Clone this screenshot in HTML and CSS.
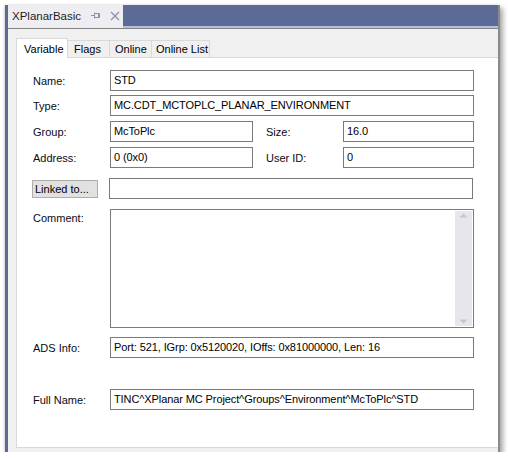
FILE: index.html
```html
<!DOCTYPE html>
<html>
<head>
<meta charset="utf-8">
<link rel="stylesheet" href="styles.css">
</head>
<body>
<div class="window">
  <div class="titlebar">
    <div class="doctab">
      <span class="doctab-title">XPlanarBasic</span>
      <svg class="pin" width="9" height="9" viewBox="0 0 9 9"><path d="M0 4.5H3.5M3.5 1.5V7.5M3.5 2.5H8.5V6.5H3.5M7.5 2.5V6.5" fill="none" stroke="#8c92ac" stroke-width="1"/></svg>
      <svg class="close" width="10" height="10" viewBox="0 0 10 10"><path d="M1 1L9 9M9 1L1 9" stroke="#8c92ac" stroke-width="1.3"/></svg>
    </div>
  </div>
  <div class="accent"></div>
  <div class="panel">
    <div class="tabs">
      <div class="tab active">Variable</div>
      <div class="tab t-flags">Flags</div>
      <div class="tab t-online">Online</div>
      <div class="tab t-list">Online List</div>
    </div>
    <div class="content">
      <div class="row r-name">
        <label class="lbl">Name:</label>
        <div class="field wide">STD</div>
      </div>
      <div class="row r-type">
        <label class="lbl">Type:</label>
        <div class="field wide">MC.CDT_MCTOPLC_PLANAR_ENVIRONMENT</div>
      </div>
      <div class="row r-group">
        <label class="lbl">Group:</label>
        <div class="field half">McToPlc</div>
        <label class="lbl lbl2">Size:</label>
        <div class="field small">16.0</div>
      </div>
      <div class="row r-addr">
        <label class="lbl">Address:</label>
        <div class="field half">0 (0x0)</div>
        <label class="lbl lbl2">User ID:</label>
        <div class="field small">0</div>
      </div>
      <div class="row r-link">
        <div class="btn-cell"><button class="btn">Linked to...</button></div>
        <div class="field wide"></div>
      </div>
      <div class="row r-comment">
        <label class="lbl top">Comment:</label>
        <div class="field wide textarea">
          <div class="scrollbar">
            <svg width="17" height="8" viewBox="0 0 17 8"><path d="M4.5 6.5L8.5 2.5L12.5 6.5Z" fill="#c6c6d0"/></svg>
            <svg width="17" height="8" viewBox="0 0 17 8"><path d="M4.5 1.5L8.5 5.5L12.5 1.5Z" fill="#c6c6d0"/></svg>
          </div>
        </div>
      </div>
      <div class="row r-ads">
        <label class="lbl">ADS Info:</label>
        <div class="field wide">Port: 521, IGrp: 0x5120020, IOffs: 0x81000000, Len: 16</div>
      </div>
      <div class="row r-full">
        <label class="lbl">Full Name:</label>
        <div class="field wide">TINC^XPlanar MC Project^Groups^Environment^McToPlc^STD</div>
      </div>
    </div>
  </div>
</div>
</body>
</html>
```
FILE: styles.css
```css
* { box-sizing: border-box; }
html, body { margin: 0; padding: 0; background: #ffffff; }
body {
  font-family: "Liberation Sans", Arial, sans-serif;
  font-size: 11px;
  color: #000;
}
.window {
  margin: 5px 0 0 5px;
  width: 495px;
  height: 447px;
  display: flex;
  flex-direction: column;
  background: #f0f0f0;
  border-left: 3px solid #5c6a96;
  border-right: 2px solid #8a8a8a;
  box-shadow: 3px 3px 5px rgba(0,0,0,0.35), -1px 0 2px rgba(0,0,0,0.15);
}
.titlebar {
  height: 21px;
  background: #5c6a96;
  display: flex;
  align-items: flex-end;
}
.doctab {
  width: 115px;
  height: 21px;
  background: #eeeef2;
  display: flex;
  align-items: center;
  padding-left: 4px;
}
.doctab-title {
  width: 78px;
  font-size: 11.5px;
  color: #1e1e1e;
  white-space: nowrap;
}
.pin { margin-left: 1px; }
.close { margin-left: 10px; }
.accent {
  height: 3px;
  background: #eeeef2;
  border-bottom: 1px solid #858585;
  position: relative;
}
.accent::after {
  content: "";
  position: absolute;
  left: 115px; right: 0; top: 0;
  height: 2px;
  background: #b4bede;
}
.panel {
  flex: 1;
  display: flex;
  flex-direction: column;
  padding: 8px 0 4px 8px;
}
.tabs {
  display: flex;
  align-items: flex-end;
  height: 20px;
}
.tab {
  height: 17px;
  border: 1px solid #d9d9d9;
  border-bottom: none;
  border-left: none;
  display: flex;
  align-items: center;
  background: #f0f0f0;
  color: #000;
  white-space: nowrap;
}
.tab.active {
  width: 52px;
  height: 20px;
  background: #ffffff;
  border-left: 1px solid #d9d9d9;
  padding-left: 7px;
  margin-bottom: -1px;
  position: relative;
  z-index: 1;
}
.t-flags { width: 42px; padding-left: 6px; }
.t-online { width: 42px; padding-left: 5px; }
.t-list { width: 58px; padding-left: 4px; }
.content {
  flex: 1;
  background: #ffffff;
  border: 1px solid #d9d9d9;
  border-right: none;
  padding: 12px 0 0 16px;
  display: flex;
  flex-direction: column;
}
.row {
  display: flex;
  align-items: center;
}
.lbl {
  width: 77px;
  color: #0a0a14;
}
.lbl.top { align-self: flex-start; padding-top: 3px; }
.lbl2 { width: 77px; margin-left: 13px; }
.field {
  height: 21px;
  border: 1px solid #7a7a7a;
  background: #fff;
  padding: 1px 3px 0 3px;
  line-height: 17px;
  white-space: nowrap;
  overflow: hidden;
  color: #000;
  letter-spacing: -0.1px;
}
.wide { width: 364px; }
.half { width: 143px; }
.small { width: 131px; }
.r-type { margin-top: 4px; }
.r-group { margin-top: 5px; }
.r-addr { margin-top: 5px; }
.r-link { margin-top: 10px; }
.btn-cell { width: 77px; margin-left: -1px; }
.btn {
  width: 66px;
  height: 18px;
  background: #e1e1e1;
  border: 1px solid #adadad;
  font-family: inherit;
  font-size: 11px;
  color: #000;
  padding: 0 0 0 2px;
  text-align: left;
  margin-top: 1px;
}
.r-comment { margin-top: 10px; }
.textarea {
  height: 119px;
  padding: 1px;
  display: flex;
  justify-content: flex-end;
}
.scrollbar {
  width: 17px;
  height: 115px;
  background: #e6e6ec;
  display: flex;
  flex-direction: column;
  justify-content: space-between;
}
.scrollbar svg { display: block; }
.r-ads { margin-top: 9px; }
.r-full { margin-top: 31px; }
```
